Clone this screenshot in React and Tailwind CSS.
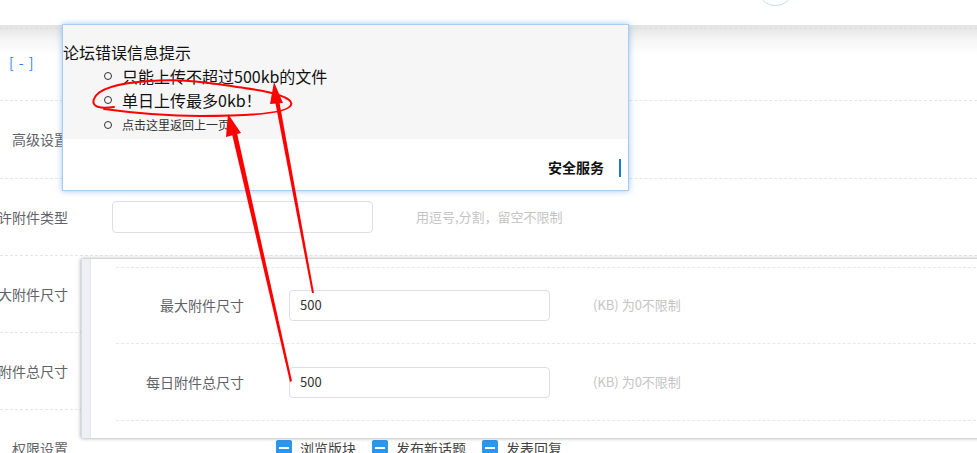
import React from "react";

const CJK = { fontFamily: '"Noto Sans CJK SC", "Noto Sans", sans-serif' };

function Row({ label, children, h = "h-[77px]" }) {
  return (
    <div className={`flex items-center ${h} border-b border-dashed border-[#e6e6e6]`}>
      <div className="w-[68px] flex justify-end whitespace-nowrap text-[14px] text-[#5f6368]">{label}</div>
      {children}
    </div>
  );
}

function Check({ label }) {
  return (
    <div className="flex items-center mr-[16px]">
      <span className="w-[16px] h-[16px] rounded-[2px] bg-[#2b96ee] flex items-center justify-center">
        <span className="w-[10px] h-[2px] bg-white"></span>
      </span>
      <span className="ml-[8px] text-[14px] text-[#444]">{label}</span>
    </div>
  );
}

function PanelRow({ label, value }) {
  return (
    <div className="flex items-center h-[77px] border-b border-dashed border-[#e8e8e8]">
      <div className="w-[128px] flex justify-end whitespace-nowrap text-[14px] text-[#5f6368]">{label}</div>
      <div className="ml-[45px] w-[261px] h-[31px] border border-[#dcdfe6] rounded-[4px] flex items-center pl-[10px] text-[13px] text-[#333]">
        {value}
      </div>
      <div className="ml-[43px] text-[13px] text-[#c4c4c4] whitespace-nowrap">(KB) 为0不限制</div>
    </div>
  );
}

export default function App() {
  return (
    <div className="relative w-[977px] h-[453px] overflow-hidden bg-white" style={CJK}>
      {/* header */}
      <div className="relative h-[25px] bg-white">
        <div className="absolute left-[757px] top-[-31px] w-[37px] h-[37px] rounded-full border-[1.5px] border-[#c6dcf2]"></div>
      </div>
      {/* background form */}
      <div className="bg-gradient-to-b from-[#e3e3e3] via-[#f6f6f6] via-[20%] to-white to-[40%]">
        <div className="h-[3px]"></div>
        <div className="border-t border-dashed border-[#dddddd]"></div>
        <div className="flex items-center h-[72px] pb-[4px] border-b border-dashed border-[#e6e6e6]">
          <span className="ml-[9px] text-[14px] text-[#1f86e6] tracking-[1px] whitespace-pre">[ - ]</span>
        </div>
      </div>
      <Row label="高级设置" h="h-[78px]" />
      <Row label="允许附件类型">
        <div className="ml-[44px] w-[261px] h-[32px] border border-[#dcdfe6] rounded-[4px]"></div>
        <div className="ml-[43px] text-[13px] text-[#c4c4c4] whitespace-nowrap">用逗号,分割，留空不限制</div>
      </Row>
      <Row label="最大附件尺寸" />
      <Row label="每日附件总尺寸" />
      <Row label="权限设置">
        <div className="ml-[208px] flex items-center">
          <Check label="浏览版块" />
          <Check label="发布新话题" />
          <Check label="发表回复" />
        </div>
      </Row>

      {/* pasted panel */}
      <div className="absolute left-[81px] top-[259px] w-[910px] h-[179px] bg-white flex shadow-[0_0_4px_rgba(0,0,0,0.4)]">
        <div className="w-[10px] bg-[#edf1f5] border-l border-[#d8dde3] border-r border-r-[#e3e8ee]"></div>
        <div className="ml-[25px] pt-[8px] flex-1">
          <div className="border-t border-dashed border-[#e8e8e8]"></div>
          <div className="-mt-[1px]">
            <PanelRow label="最大附件尺寸" value="500" />
            <PanelRow label="每日附件总尺寸" value="500" />
          </div>
        </div>
      </div>

      {/* error dialog */}
      <div className="absolute left-[62px] top-[24px] w-[567px] h-[167px] bg-white border border-[#a9ccf2] shadow-[0_0_6px_rgba(80,150,230,0.55)] flex flex-col">
        <div className="h-[114px] bg-[#f6f6f6] pt-[16px]">
          <div className="text-[16px] leading-[22px] text-[#111] whitespace-nowrap">论坛错误信息提示</div>
          <div className="ml-[41px] mt-[1px]">
            <div className="flex items-center h-[24px]">
              <span className="w-[8px] h-[8px] rounded-full border-[1.5px] border-[#333]"></span>
              <span className="ml-[10px] text-[16px] text-[#111] whitespace-nowrap">只能上传不超过500kb的文件</span>
            </div>
            <div className="flex items-center h-[24px]">
              <span className="w-[8px] h-[8px] rounded-full border-[1.5px] border-[#333]"></span>
              <span className="ml-[10px] text-[16px] text-[#111] whitespace-nowrap">单日上传最多0kb！</span>
            </div>
            <div className="flex items-center h-[25px]">
              <span className="w-[8px] h-[8px] rounded-full border-[1.5px] border-[#333]"></span>
              <span className="ml-[10px] text-[12px] text-[#333] whitespace-nowrap">点击这里返回上一页</span>
            </div>
          </div>
        </div>
        <div className="flex-1 flex items-center justify-end pr-[7px] pt-[6px]">
          <span className="text-[14px] font-bold text-[#111]">安全服务</span>
          <span className="ml-[15px] w-[2px] h-[18px] bg-[#1a7fc4]"></span>
        </div>
      </div>

      {/* red annotations */}
      <svg className="absolute inset-0 pointer-events-none" width="977" height="453" viewBox="0 0 977 453">
        <path
          d="M 114,107 C 100,109 91,107 94,99 C 98,88 118,83 150,81 C 190,78 222,85 244,88 C 274,92 294,98 291,105 C 288,113 250,116 200,116 C 160,116 126,112 104,109"
          fill="none"
          stroke="#ff0000"
          strokeWidth="2"
          strokeLinecap="round"
        />
        {/* arrow 1 */}
        <polygon points="312,293 314,293 279,100 275,101" fill="#ff0000" />
        <polygon points="274,82 283,103 270,104" fill="#ff0000" />
        {/* arrow 2 */}
        <polygon points="290,382 292,381 237,133 232,134" fill="#ff0000" />
        <polygon points="228,114 241,133 226,137" fill="#ff0000" />
      </svg>
    </div>
  );
}
